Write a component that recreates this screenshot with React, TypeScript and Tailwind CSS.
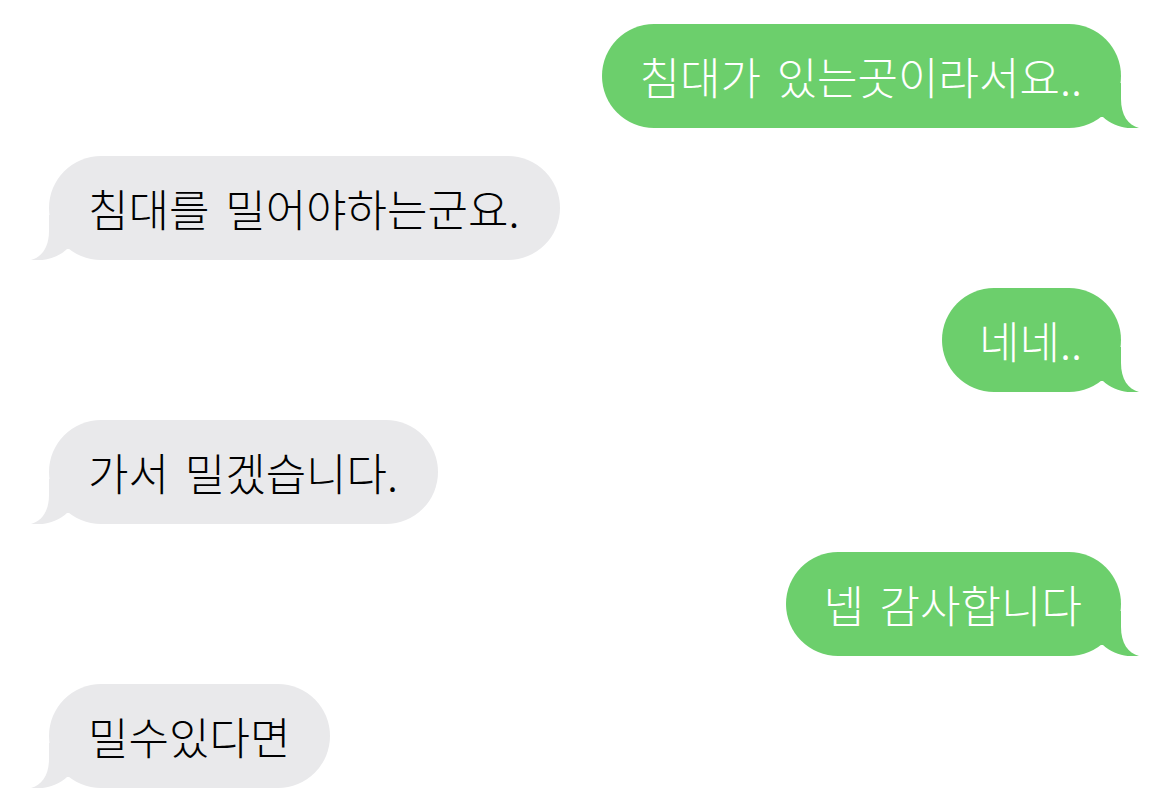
import React from 'react';

type Message = {
  id: number;
  text: string;
  mine: boolean;
};

const messages: Message[] = [
  { id: 1, text: '침대가 있는곳이라서요..', mine: true },
  { id: 2, text: '침대를 밀어야하는군요.', mine: false },
  { id: 3, text: '네네..', mine: true },
  { id: 4, text: '가서 밀겠습니다.', mine: false },
  { id: 5, text: '넵 감사합니다', mine: true },
  { id: 6, text: '밀수있다면', mine: false },
];

const Tail: React.FC<{ mine: boolean }> = ({ mine }) => (
  <svg
    className={
      mine
        ? 'absolute bottom-0 right-[-18px] w-[40px] h-[45px] text-[#6ccf6c]'
        : 'absolute bottom-0 left-[-18px] w-[40px] h-[45px] text-[#e9e9eb] -scale-x-100'
    }
    viewBox="0 0 40 45"
    fill="currentColor"
  >
    <path d="M0 0 L22 0 L22 16 C22 32 29 42 40 45 C31 46.5 14 44 4 34 L0 34 Z" />
  </svg>
);

const Bubble: React.FC<{ message: Message }> = ({ message }) => {
  const { mine, text } = message;
  return (
    <div className={mine ? 'flex justify-end' : 'flex justify-start'}>
      <div
        className={
          mine
            ? 'relative h-[104px] rounded-full bg-[#6ccf6c] text-white flex items-center pl-[37px] pr-[39px]'
            : 'relative h-[104px] rounded-full bg-[#e9e9eb] text-black flex items-center pl-[39px] pr-[40px]'
        }
      >
        <Tail mine={mine} />
        <span className="relative whitespace-nowrap text-[44px] font-light leading-none [word-spacing:6px]">
          {text}
        </span>
      </div>
    </div>
  );
};

export default function App() {
  return (
    <div
      className="min-h-[811px] w-full bg-white px-[49px] pt-[24px] flex flex-col gap-[28px]"
      style={{ fontFamily: '"Noto Sans CJK KR", "Noto Sans", sans-serif' }}
    >
      {messages.map((m) => (
        <Bubble key={m.id} message={m} />
      ))}
    </div>
  );
}
